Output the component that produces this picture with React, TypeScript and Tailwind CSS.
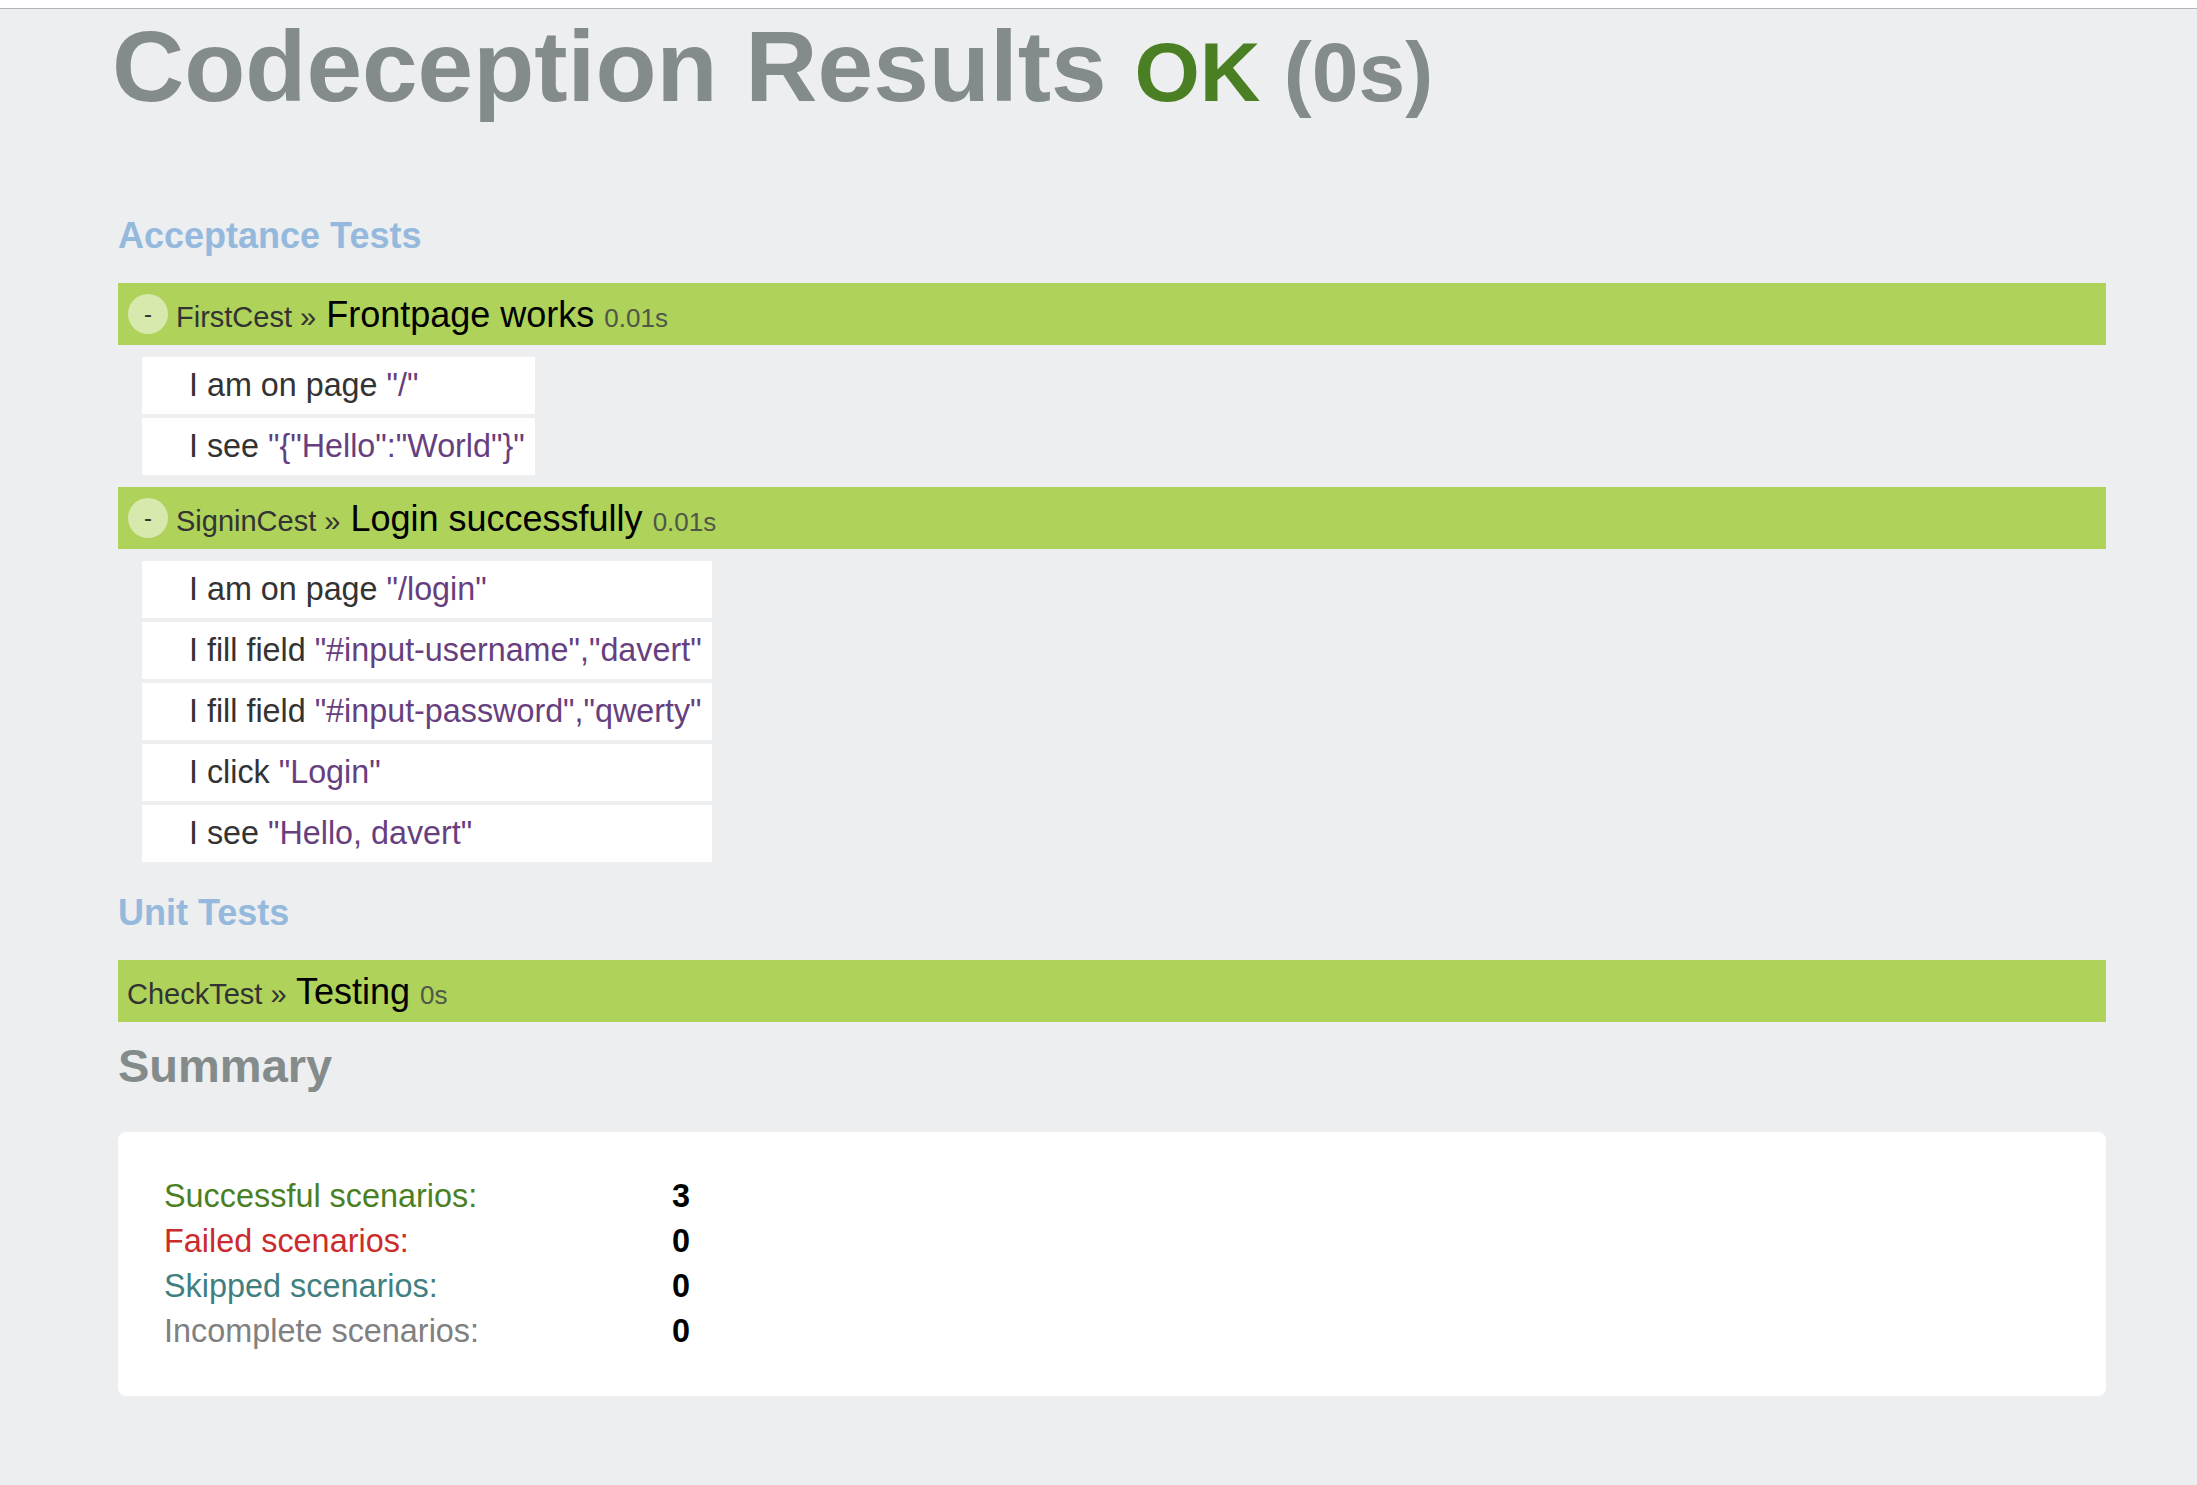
const acceptance = [
  {
    cls: "FirstCest",
    name: "Frontpage works",
    time: "0.01s",
    steps: [
      { text: "I am on page", arg: '"/"' },
      { text: "I see", arg: '"{"Hello":"World"}"' },
    ],
  },
  {
    cls: "SigninCest",
    name: "Login successfully",
    time: "0.01s",
    steps: [
      { text: "I am on page", arg: '"/login"' },
      { text: "I fill field", arg: '"#input-username","davert"' },
      { text: "I fill field", arg: '"#input-password","qwerty"' },
      { text: "I click", arg: '"Login"' },
      { text: "I see", arg: '"Hello, davert"' },
    ],
  },
];

const summary = [
  { label: "Successful scenarios:", value: "3", color: "text-[#4b7f23]" },
  { label: "Failed scenarios:", value: "0", color: "text-[#cc2b2b]" },
  { label: "Skipped scenarios:", value: "0", color: "text-[#3f7f80]" },
  { label: "Incomplete scenarios:", value: "0", color: "text-[#808080]" },
];

const ScenarioTitle = ({ cls, name, time }: { cls: string; name: string; time: string }) => (
  <p className="whitespace-nowrap text-[36px] leading-[40px] pt-[1px]">
    <span className="text-[29px] leading-[32px] text-[#333]">{cls} »</span>{" "}
    <span className="text-black">{name}</span>{" "}
    <span className="text-[26px] leading-[28px] text-[#4f5747]">{time}</span>
  </p>
);

export default function App() {
  return (
    <div className="min-h-screen bg-[#edeef0] font-['Liberation_Sans',Arial,sans-serif] pb-[60px]">
      {/* top strip */}
      <div className="h-[9px] bg-white border-b border-[#b4b4b4]" />

      {/* Titre */}
      <h1 className="ml-[112px] mt-[7px] text-[100px] leading-[100px] font-bold text-[#848b8b] whitespace-nowrap">
        Codeception Results{" "}
        <span className="text-[84px] leading-[80px]">
          <span className="text-[#4b7f23]">OK</span> (0s)
        </span>
      </h1>

      <div className="ml-[118px] w-[1988px] flex flex-col">
        {/* ── Acceptance ── */}
        <h2 className="mt-[100px] text-[36px] leading-[40px] font-bold text-[#94b9dd]">Acceptance Tests</h2>

        <div className="mt-[27px] flex flex-col">
          {acceptance.map((sc, i) => (
            <div key={i} className={i > 0 ? "mt-[12px]" : ""}>
              <div className="h-[62px] bg-[#aed25a] flex items-center pl-[10px]">
                <span className="w-10 h-10 rounded-full bg-white/50 flex items-center justify-center text-[24px] text-[#333] mr-2 shrink-0">
                  -
                </span>
                <ScenarioTitle cls={sc.cls} name={sc.name} time={sc.time} />
              </div>
              <div className="mt-[12px] ml-[24px] w-fit flex flex-col gap-[4px]">
                {sc.steps.map((st, j) => (
                  <div
                    key={j}
                    className="h-[57px] bg-white flex items-center pl-[47px] pr-[10px] text-[32.3px] text-[#333] whitespace-nowrap"
                  >
                    {st.text}&nbsp;<span className="text-[#673f7f]">{st.arg}</span>
                  </div>
                ))}
              </div>
            </div>
          ))}
        </div>

        {/* ── Unit ── */}
        <h2 className="mt-[31px] text-[36px] leading-[40px] font-bold text-[#94b9dd]">Unit Tests</h2>
        <div className="mt-[27px] h-[62px] bg-[#aed25a] flex items-center pl-[9px]">
          <ScenarioTitle cls="CheckTest" name="Testing" time="0s" />
        </div>

        {/* ── Summary ── */}
        <h2 className="mt-[18px] text-[47px] leading-[52px] font-bold text-[#848b8b]">Summary</h2>
        <div className="mt-[40px] bg-white rounded-lg pt-[42px] pb-[42px] pl-[46px]">
          {summary.map((row, i) => (
            <div key={i} className="grid grid-cols-[508px_auto] h-[45px] text-[32.4px] leading-[45px]">
              <span className={row.color}>{row.label}</span>
              <span className="font-bold text-black">{row.value}</span>
            </div>
          ))}
        </div>
      </div>
    </div>
  );
}
